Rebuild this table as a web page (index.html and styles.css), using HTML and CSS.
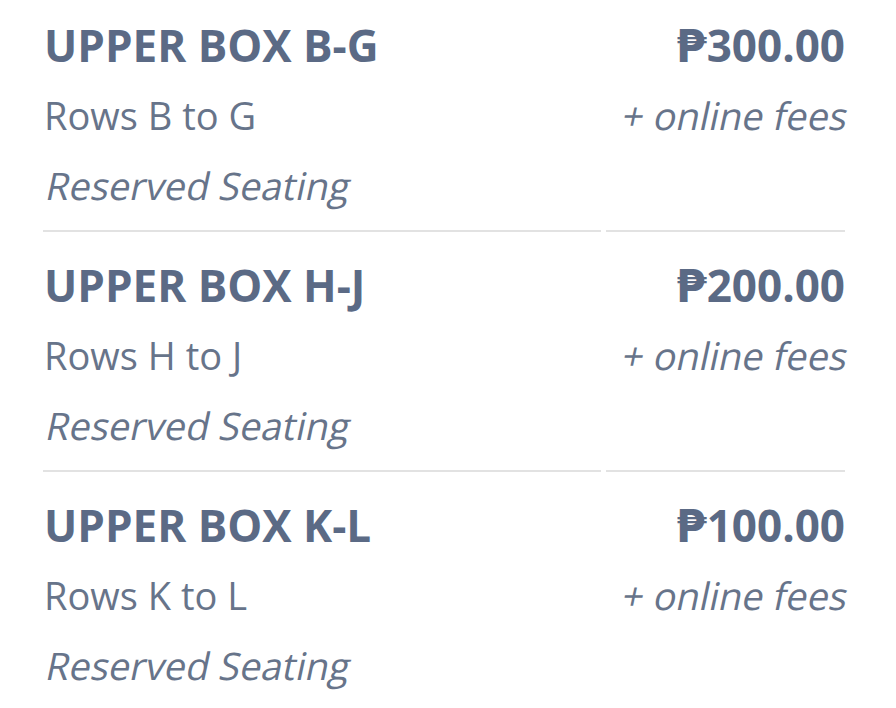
FILE: index.html
```html
<!DOCTYPE html>
<html>
<head>
<meta charset="utf-8">
<link rel="stylesheet" href="styles.css">
</head>
<body>
<div class="list">
  <div class="tier">
    <div class="info">
      <div class="name">UPPER BOX B-G</div>
      <div class="rows">Rows B to G</div>
      <div class="seating"><span class="slant">Reserved Seating</span></div>
    </div>
    <div class="pricing">
      <div class="price">₱300.00</div>
      <div class="fees"><span class="slant">+ online fees</span></div>
    </div>
  </div>
  <div class="tier">
    <div class="info">
      <div class="name">UPPER BOX H-J</div>
      <div class="rows">Rows H to J</div>
      <div class="seating"><span class="slant">Reserved Seating</span></div>
    </div>
    <div class="pricing">
      <div class="price">₱200.00</div>
      <div class="fees"><span class="slant">+ online fees</span></div>
    </div>
  </div>
  <div class="tier last">
    <div class="info">
      <div class="name">UPPER BOX K-L</div>
      <div class="rows">Rows K to L</div>
      <div class="seating"><span class="slant">Reserved Seating</span></div>
    </div>
    <div class="pricing">
      <div class="price">₱100.00</div>
      <div class="fees"><span class="slant">+ online fees</span></div>
    </div>
  </div>
</div>
</body>
</html>
```

FILE: styles.css
```css
html, body {
  margin: 0;
  padding: 0;
  background: #ffffff;
}

body {
  font-family: "Open Sans", "DejaVu Sans", sans-serif;
  color: #5d6c86;
}

.list {
  padding: 0 51px 0 43px;
}

.tier {
  display: grid;
  grid-template-columns: 558px 1fr;
  column-gap: 5px;
}

.tier > div {
  padding: 18px 0 10px;
  border-bottom: 2px solid #e2e2e2;
}

.tier:first-child > div {
  padding-top: 10px;
}

.tier.last > div {
  border-bottom: none;
}

.info {
  padding-left: 1px !important;
}

.name, .price {
  font-size: 44px;
  font-weight: 700;
  line-height: 70px;
  color: #5b6a85;
}

.rows, .seating, .fees {
  font-size: 38px;
  font-weight: 400;
  line-height: 70px;
  color: #67748a;
}

.slant {
  display: inline-block;
  transform: skewX(-12deg);
  transform-origin: 50% 72%;
}

.pricing {
  text-align: right;
}
```
